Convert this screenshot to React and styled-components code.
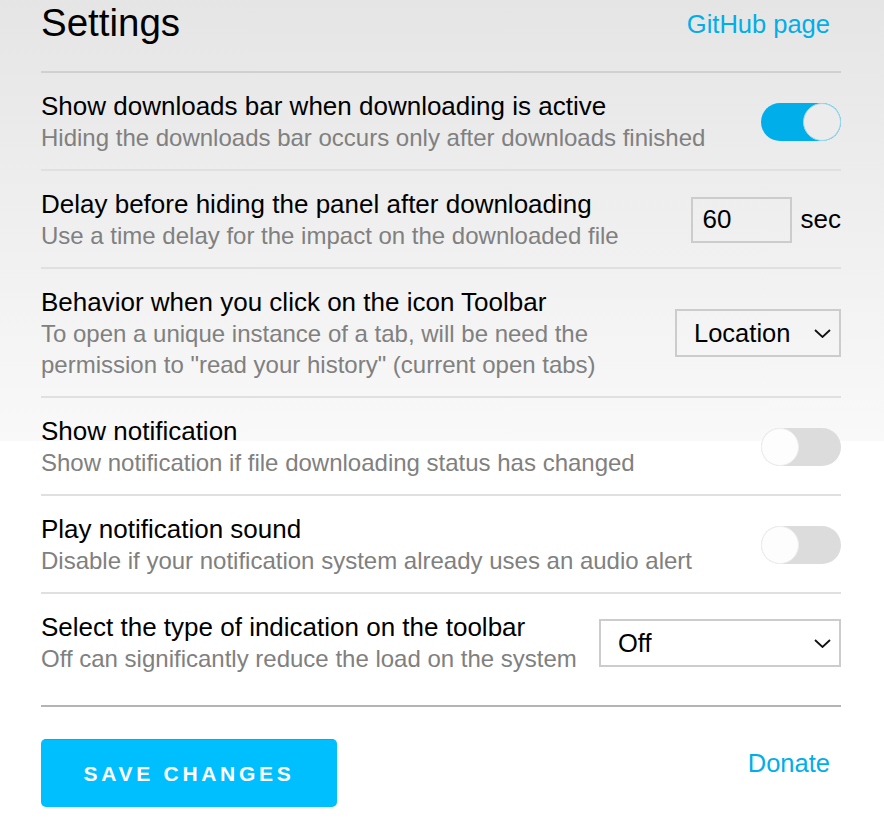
import React, { useState } from 'react';
import styled, { createGlobalStyle } from 'styled-components';

const GlobalStyle = createGlobalStyle`
  html {
    background: linear-gradient(to bottom, #e5e5e5 0px, #f9f9f9 441px, #ffffff 441px) no-repeat;
    background-color: #fff;
    min-height: 100%;
  }
  body {
    margin: 0;
    font-family: "Liberation Sans", Arial, sans-serif;
    color: #000;
  }
`;

const Page = styled.div`
  width: 800px;
  margin: 0 0 0 41px;
  padding-bottom: 18px;
`;

const Header = styled.header`
  display: flex;
  justify-content: space-between;
  align-items: flex-start;
  height: 71px;
  border-bottom: 2px solid #d0d0d0;
`;

const Title = styled.h1`
  margin: 0;
  font-size: 38.5px;
  font-weight: normal;
  line-height: 46px;
`;

const Link = styled.a`
  color: #00aee9;
  font-size: 25.5px;
  line-height: 48px;
  text-decoration: none;
  margin-right: 11px;
`;

const Row = styled.div`
  display: flex;
  align-items: center;
  gap: 20px;
  padding: 17px 0 ${p => (p.last ? '31px' : '16px')};
  border-bottom: 2px solid ${p => (p.last ? '#b4b4b4' : '#e0e0e0')};
`;

const Text = styled.div`
  flex: 1;
  min-width: 0;
`;

const Label = styled.div`
  font-size: 26px;
  line-height: 32px;
`;

const Desc = styled.div`
  font-size: 24px;
  line-height: 31px;
  color: #808080;
`;

const Track = styled.button`
  width: 80px;
  height: 38px;
  flex: none;
  padding: 0;
  border: none;
  border-radius: 19px;
  background: ${p => (p.on ? '#00aeea' : '#dcdcdc')};
  display: flex;
  justify-content: ${p => (p.on ? 'flex-end' : 'flex-start')};
  cursor: pointer;
`;

const Knob = styled.span`
  width: 38px;
  height: 38px;
  box-sizing: border-box;
  border-radius: 50%;
  background: ${p => (p.on ? '#ececec' : '#fdfdfd')};
  border: 1px solid ${p => (p.on ? '#9fd8ee' : '#eeeeee')};
`;

const DelayBox = styled.div`
  display: flex;
  align-items: center;
  gap: 9px;
  flex: none;
`;

const NumberInput = styled.input`
  width: 101px;
  height: 46px;
  box-sizing: border-box;
  border: 2px solid #cccccc;
  background: transparent;
  font-family: inherit;
  font-size: 26px;
  padding: 0 10px;
  color: #000;
  outline: none;
`;

const Unit = styled.span`
  font-size: 26px;
`;

const SelectWrap = styled.div`
  position: relative;
  flex: none;
  width: ${p => p.width}px;
`;

const Select = styled.select`
  appearance: none;
  width: 100%;
  height: 48px;
  box-sizing: border-box;
  border: 2px solid #cccccc;
  border-radius: 0;
  background: transparent;
  font-family: inherit;
  font-size: 25.5px;
  color: #000;
  padding: 0 40px 0 17px;
  outline: none;
`;

const Chevron = styled.svg`
  position: absolute;
  right: 10px;
  top: 20px;
  pointer-events: none;
`;

const Footer = styled.footer`
  display: flex;
  justify-content: space-between;
  align-items: flex-start;
  padding-top: 32px;
`;

const SaveButton = styled.button`
  width: 296px;
  height: 68px;
  border: none;
  border-top: 1px solid #00b0ec;
  border-radius: 5px;
  background: #00bfff;
  color: #fff;
  font-family: inherit;
  font-size: 21px;
  font-weight: bold;
  letter-spacing: 3.7px;
  padding: 0;
  cursor: pointer;
`;

const Toggle = ({ on, onClick }) => (
  <Track on={on} onClick={onClick}>
    <Knob on={on} />
  </Track>
);

const Dropdown = ({ width, value, options }) => (
  <SelectWrap width={width}>
    <Select defaultValue={value}>
      {options.map(o => (
        <option key={o}>{o}</option>
      ))}
    </Select>
    <Chevron width="17" height="9" viewBox="0 0 17 9">
      <path d="M1 1l7.5 7 7.5-7" fill="none" stroke="#111" strokeWidth="1.8" />
    </Chevron>
  </SelectWrap>
);

export default function App() {
  const [bar, setBar] = useState(true);
  const [notify, setNotify] = useState(false);
  const [sound, setSound] = useState(false);

  return (
    <Page>
      <GlobalStyle />
      <Header>
        <Title>Settings</Title>
        <Link href="#">GitHub page</Link>
      </Header>

      <Row>
        <Text>
          <Label>Show downloads bar when downloading is active</Label>
          <Desc>Hiding the downloads bar occurs only after downloads finished</Desc>
        </Text>
        <Toggle on={bar} onClick={() => setBar(!bar)} />
      </Row>

      <Row>
        <Text>
          <Label>Delay before hiding the panel after downloading</Label>
          <Desc>Use a time delay for the impact on the downloaded file</Desc>
        </Text>
        <DelayBox>
          <NumberInput defaultValue="60" />
          <Unit>sec</Unit>
        </DelayBox>
      </Row>

      <Row>
        <Text>
          <Label>Behavior when you click on the icon Toolbar</Label>
          <Desc>
            To open a unique instance of a tab, will be need the permission to "read your
            history" (current open tabs)
          </Desc>
        </Text>
        <Dropdown width={166} value="Location" options={['Location', 'Tab', 'Window']} />
      </Row>

      <Row>
        <Text>
          <Label>Show notification</Label>
          <Desc>Show notification if file downloading status has changed</Desc>
        </Text>
        <Toggle on={notify} onClick={() => setNotify(!notify)} />
      </Row>

      <Row>
        <Text>
          <Label>Play notification sound</Label>
          <Desc>Disable if your notification system already uses an audio alert</Desc>
        </Text>
        <Toggle on={sound} onClick={() => setSound(!sound)} />
      </Row>

      <Row last>
        <Text>
          <Label>Select the type of indication on the toolbar</Label>
          <Desc>Off can significantly reduce the load on the system</Desc>
        </Text>
        <Dropdown width={242} value="Off" options={['Off', 'Progress', 'Badge']} />
      </Row>

      <Footer>
        <SaveButton>SAVE CHANGES</SaveButton>
        <Link href="#">Donate</Link>
      </Footer>
    </Page>
  );
}
